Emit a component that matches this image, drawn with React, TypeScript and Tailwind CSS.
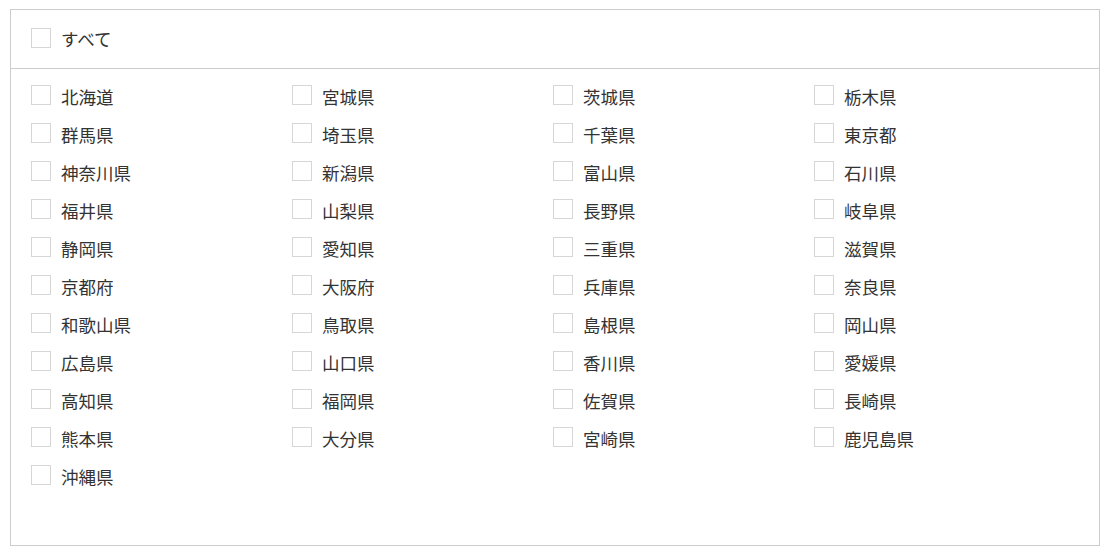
const prefs = [
  "北海道","宮城県","茨城県","栃木県",
  "群馬県","埼玉県","千葉県","東京都",
  "神奈川県","新潟県","富山県","石川県",
  "福井県","山梨県","長野県","岐阜県",
  "静岡県","愛知県","三重県","滋賀県",
  "京都府","大阪府","兵庫県","奈良県",
  "和歌山県","鳥取県","島根県","岡山県",
  "広島県","山口県","香川県","愛媛県",
  "高知県","福岡県","佐賀県","長崎県",
  "熊本県","大分県","宮崎県","鹿児島県",
  "沖縄県",
];

function Item({ label }: { label: string }) {
  return (
    <label className="flex items-center h-[38px]">
      <span className="w-5 h-5 border border-[#d6d6d6] bg-white shrink-0" />
      <span className="ml-[10px] text-[17.5px] text-[#333] leading-none pt-[3px]">{label}</span>
    </label>
  );
}

export default function App() {
  return (
    <div
      className="w-[1108px] h-[558px] bg-white pt-[9px] pl-[10px]"
      style={{ fontFamily: '"Noto Sans CJK JP", "Noto Sans", sans-serif' }}
    >
      <div className="w-[1090px] h-[537px] border border-[#cccccc]">
        <div className="h-[59px] flex items-center pl-5 pb-[2px] border-b border-[#cccccc]">
          <span className="w-5 h-5 border border-[#d6d6d6] bg-white shrink-0" />
          <span className="ml-[10px] text-[17.5px] text-[#333] leading-none pt-[1px]">すべて</span>
        </div>
        <div className="grid grid-cols-4 pl-5 pr-[24px] pt-[7px]">
          {prefs.map((p) => (
            <Item key={p} label={p} />
          ))}
        </div>
      </div>
    </div>
  );
}
